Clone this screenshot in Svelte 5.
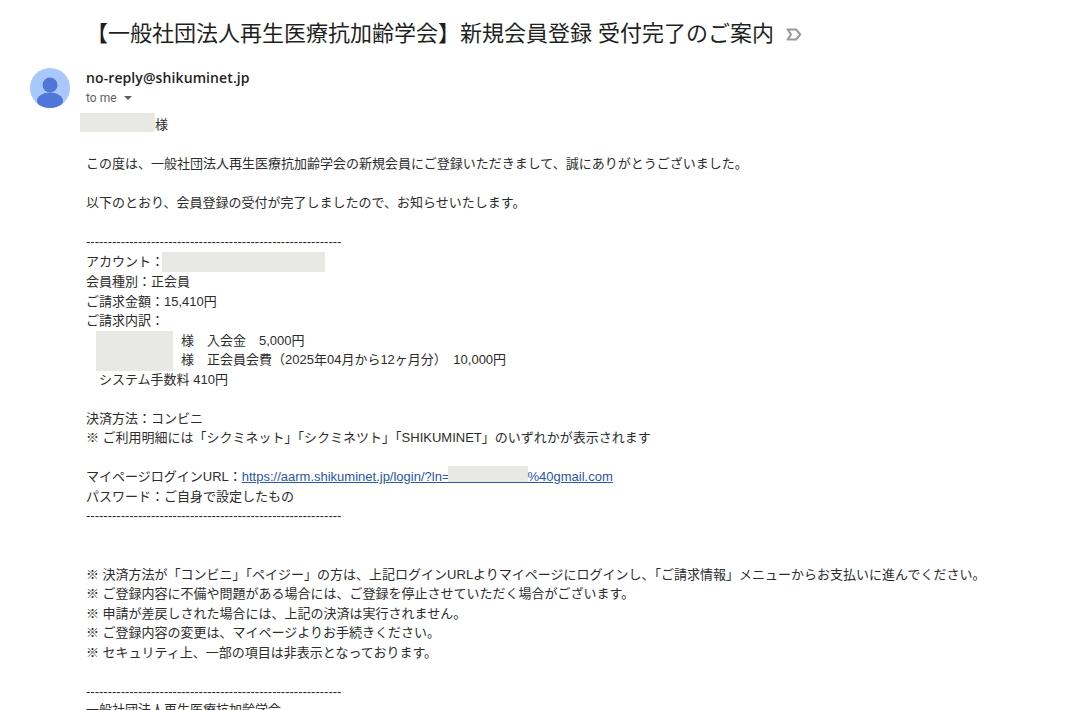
<script>
  const noticeLines = [
    '※ 決済方法が「コンビニ」「ペイジー」の方は、上記ログインURLよりマイページにログインし、「ご請求情報」メニューからお支払いに進んでください。',
    '※ ご登録内容に不備や問題がある場合には、ご登録を停止させていただく場合がございます。',
    '※ 申請が差戻しされた場合には、上記の決済は実行されません。',
    '※ ご登録内容の変更は、マイページよりお手続きください。',
    '※ セキュリティ上、一部の項目は非表示となっております。'
  ];
  const rule = '-----------------------------------------------------------';
</script>

<div class="page">
  <header class="subject">
    <h1>【一般社団法人再生医療抗加齢学会】新規会員登録 受付完了のご案内</h1>
    <svg class="label" width="16" height="13" viewBox="0 0 16 13">
      <path d="M1.6 1.4h8.4l4.2 5.1-4.2 5.1H1.6L5 6.5z" fill="none" stroke="#9a9a9a" stroke-width="2" stroke-linejoin="round"/>
    </svg>
  </header>

  <div class="sender">
    <svg class="avatar" width="40" height="40" viewBox="0 0 40 40">
      <defs><clipPath id="round"><circle cx="20" cy="20" r="20"/></clipPath></defs>
      <circle cx="20" cy="20" r="20" fill="#a8c7fa"/>
      <g clip-path="url(#round)" fill="#4f77d9">
        <circle cx="20" cy="17" r="7.5"/>
        <ellipse cx="20" cy="33" rx="13" ry="8.5"/>
      </g>
    </svg>
    <div class="who">
      <div class="from">no-reply@shikuminet.jp</div>
      <div class="to">to me <span class="caret"></span></div>
    </div>
  </div>

  <div class="body">
    <div><span class="mask first"></span>様</div>
    <div class="blank"></div>
    <div>この度は、一般社団法人再生医療抗加齢学会の新規会員にご登録いただきまして、誠にありがとうございました。</div>
    <div class="blank"></div>
    <div>以下のとおり、会員登録の受付が完了しましたので、お知らせいたします。</div>
    <div class="blank"></div>
    <div>{rule}</div>
    <div>アカウント：<span class="mask account"></span></div>
    <div>会員種別：正会員</div>
    <div>ご請求金額：15,410円</div>
    <div>ご請求内訳：</div>
    <div class="detail">
      <span class="mask names"></span>
      <div>様　入会金　5,000円</div>
      <div>様　正会員会費（2025年04月から12ヶ月分）　10,000円</div>
    </div>
    <div class="fee">システム手数料 410円</div>
    <div class="blank"></div>
    <div>決済方法：コンビニ</div>
    <div>※ ご利用明細には「シクミネット」「シクミネツト」「SHIKUMINET」のいずれかが表示されます</div>
    <div class="blank"></div>
    <div>マイページログインURL：<a href="#top">https://aarm.shikuminet.jp/login/?ln=<span class="mask link"></span>%40gmail.com</a></div>
    <div>パスワード：ご自身で設定したもの</div>
    <div>{rule}</div>
    <div class="blank"></div>
    <div class="blank"></div>
    {#each noticeLines as line}
      <div>{line}</div>
    {/each}
    <div class="blank"></div>
    <div>{rule}</div>
    <div class="org">一般社団法人再生医療抗加齢学会</div>
  </div>
</div>

<style>
  :global(body) {
    margin: 0;
    background: #fff;
  }
  .page {
    width: 1066px;
    height: 710px;
    overflow: hidden;
    font-family: "Liberation Sans", "Noto Sans CJK JP", sans-serif;
    color: #2c2c2c;
  }
  .subject {
    display: flex;
    align-items: center;
    gap: 12px;
    padding: 17px 0 0 86px;
    height: 33px;
  }
  h1 {
    margin: 0;
    font-size: 22px;
    font-weight: 400;
    line-height: 30px;
    color: #1f1f1f;
  }
  .label {
    margin-top: 1px;
  }
  .sender {
    display: flex;
    gap: 16px;
    padding: 18px 0 0 30px;
    height: 44px;
  }
  .from {
    font-family: "Open Sans", "Noto Sans", sans-serif;
    font-size: 14px;
    font-weight: 600;
    letter-spacing: 0.1px;
    line-height: 20px;
    color: #1f1f1f;
  }
  .to {
    font-family: Roboto, "Noto Sans", sans-serif;
    font-size: 12px;
    line-height: 20px;
    color: #5e5e5e;
  }
  .caret {
    display: inline-block;
    margin: 0 0 2px 4px;
    border: 4px solid transparent;
    border-top: 4px solid #5e5e5e;
    border-bottom: 0;
  }
  .body {
    padding: 3px 0 0 86px;
    font-size: 13px;
    line-height: 19.5px;
    white-space: nowrap;
  }
  .blank {
    height: 19.5px;
  }
  .org {
    margin-top: -1px;
  }
  .mask {
    display: inline-block;
    background: #e8e8e4;
    vertical-align: top;
    height: 19px;
  }
  .first {
    width: 75px;
    margin: -2px 0 0 -6px;
  }
  .account {
    width: 163px;
    height: 20px;
    margin: 0.5px 0 0 -2px;
  }
  .detail {
    position: relative;
    padding-left: 95px;
  }
  .names {
    position: absolute;
    left: 10px;
    top: 0;
    width: 77px;
    height: 40px;
  }
  .fee {
    padding-left: 13px;
  }
  a {
    color: #2a56a8;
    text-decoration: underline;
  }
  .link {
    box-sizing: border-box;
    width: 80px;
    height: 17px;
    margin: -1px 0 0 -2px;
    border-bottom: 1px solid #2a56a8;
  }
</style>
